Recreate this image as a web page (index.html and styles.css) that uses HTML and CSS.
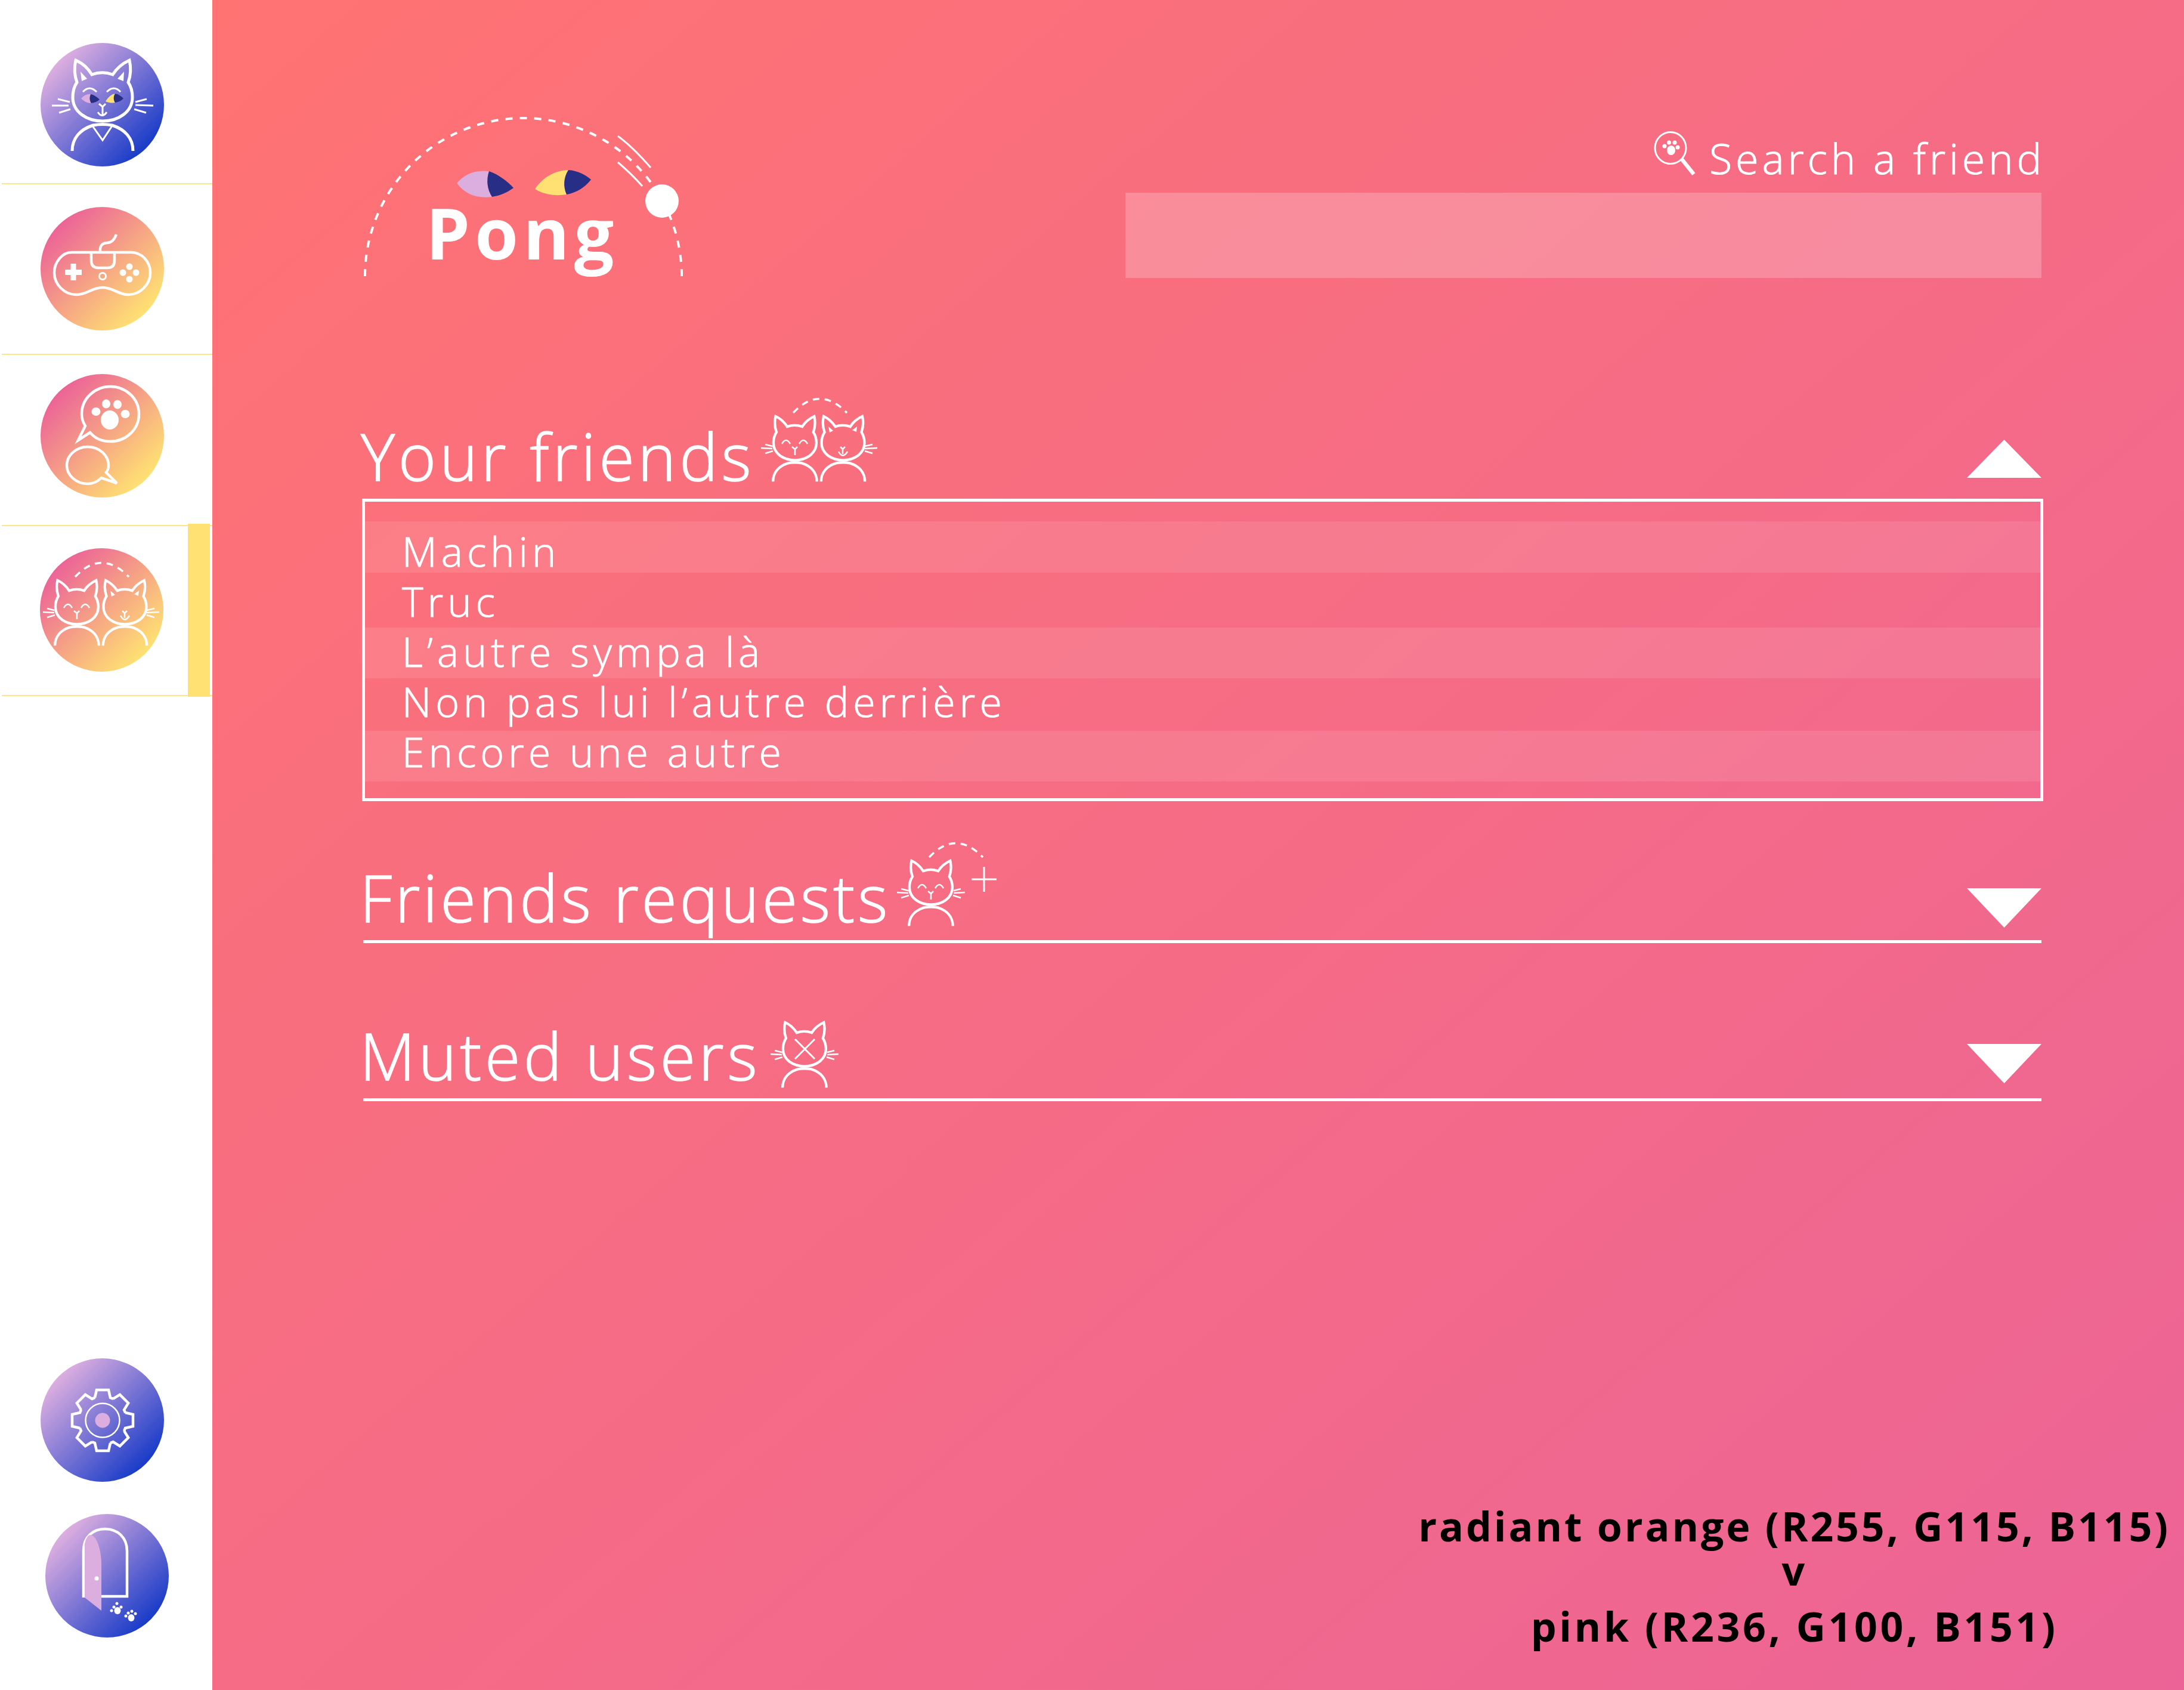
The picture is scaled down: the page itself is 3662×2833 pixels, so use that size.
FILE: index.html
```html
<!DOCTYPE html>
<html lang="en">
<head>
    <meta charset="UTF-8">
    <meta name="viewport" content="width=device-width, initial-scale=1.0">
    <title>Pong - Friends</title>
    <link rel="stylesheet" href="styles.css">
</head>
<body>
    <!-- shared cat drawings -->
    <svg class="sprites" aria-hidden="true">
        <defs>
            <g id="cat-shape">
                <path d="M59 29C72 35 79 42 86 53C97 49 110 49 121 53C128 42 136 35 149 29C152 42 151 55 147 66C151 72 154 80 154 91C154 116 130 131 104 131C78 131 54 116 54 91C54 80 57 72 61 66C57 55 56 42 59 29Z"/>
                <path d="M53 181C53 160 66 145 88 138Q104 135 120 138C142 145 155 160 155 181"/>
            </g>
            <g id="whiskers-left" stroke-width="2.5">
                <path d="M12 101L24 104M5 107L24 108M12 116L25 112"/>
            </g>
            <g id="cat-happy">
                <use href="#cat-shape" transform="translate(-13 33) scale(.72)" stroke-width="6"/>
                <path stroke-width="2.5" d="M40 100Q47 88 54 100M69 100Q76 88 83 100M57 105L62 109L66 105M62 109V119"/>
                <use href="#whiskers-left"/>
            </g>
            <g id="dash-arc">
                <path stroke-width="3.5" stroke-dasharray="11 9" d="M59 48Q103 1 149 48"/>
            </g>
            <g id="two-cats">
                <use href="#dash-arc"/>
                <use href="#cat-happy"/>
                <use href="#cat-shape" transform="translate(67.6 33) scale(.72)" stroke-width="6"/>
                <path stroke="none" fill="#fff" d="M118 71L126 78L120 81ZM166 71L158 77L165 80Z"/>
                <path stroke-width="2.5" d="M138 105L142 109L146 105M142 109V117M135 113Q142 126 150 113M192 101L179 104M200 107L179 108M192 116L179 112"/>
            </g>
        </defs>
    </svg>

    <div class="page">
        <nav class="sidebar">
            <div class="nav-list">
                <div class="nav-item nav-profile">
                    <svg class="avatar avatar-cool" viewBox="0 0 207 207">
                        <g class="lines" stroke-width="5">
                            <use href="#cat-shape"/>
                            <path stroke-width="3" d="M71 82Q82 70 94 82M111 82Q123 70 134 82M98 102L104 107L109 102M104 107V120M96 116Q103 127 111 116M87 139L104 163L120 139"/>
                            <path stroke-width="3" d="M29 94L49 99M19 105L47 105M31 117L50 111M178 94L159 99M189 105L159 104M177 117L157 111"/>
                        </g>
                        <path fill="#fff" d="M67 48L78 60L69 64ZM140 48L129 60L139 64Z"/>
                        <path fill="#dcaee0" d="M68 93C73 88 78 85 84 86C82 91 82 96 85 101C78 101 73 98 68 93Z"/>
                        <path fill="#ffe173" d="M109 98C114 90 119 86 125 85C122 90 122 95 125 100C119 101 114 100 109 98Z"/>
                        <path fill="#262e85" d="M84 86C90 87 95 91 99 95C94 99 90 100 85 101C82 96 82 91 84 86ZM125 85C131 86 135 89 139 93C135 97 131 99 125 100C122 95 122 90 125 85Z"/>
                    </svg>
                </div>
                <div class="nav-item nav-game">
                    <svg class="avatar avatar-warm" viewBox="0 0 207 207">
                        <g class="lines" stroke-width="4.5">
                            <path d="M52 76H152C170 76 184 92 184 110C184 130 167 147 147 147C130 147 122 135 104 135C86 135 78 147 60 147C40 147 23 130 23 110C23 92 37 76 52 76Z"/>
                            <path d="M85 76V90Q85 102 97 102H112Q124 102 124 90V76M100 74C99 64 105 60 112 60C120 60 124 54 127 46"/>
                            <circle cx="104" cy="116" r="5.5" stroke-width="3"/>
                        </g>
                        <path fill="#fff" d="M50.500 95H59.500V105H69V114H59.500V123H50.500V114H41V105H50.500Z"/>
                        <g fill="#fff">
                            <circle cx="149" cy="100" r="5.500"/>
                            <circle cx="160" cy="110" r="5.500"/>
                            <circle cx="149" cy="121" r="5.500"/>
                            <circle cx="138" cy="110" r="5.500"/>
                        </g>
                    </svg>
                </div>
                <div class="nav-item nav-chat">
                    <svg class="avatar avatar-warm" viewBox="0 0 207 207">
                        <g class="lines" stroke-width="4.5">
                            <path d="M83 98C92 109 104 113 117 113C143 113 165 93 165 67C165 41 143 21 117 21C91 21 69 41 69 67C69 74 71 81 75 87L63 111Z"/>
                            <path d="M102 174C96 180 88 184 79 184C60 184 44 170 44 153C44 136 60 122 79 122C98 122 114 136 114 153C114 157 113 161 110 165L128 183Z"/>
                        </g>
                        <g fill="#fff">
                            <ellipse cx="116" cy="77" rx="15" ry="16"/>
                            <ellipse cx="93" cy="63" rx="7.500" ry="7"/>
                            <ellipse cx="110" cy="50" rx="7" ry="7.500"/>
                            <ellipse cx="129" cy="51" rx="7" ry="7.500"/>
                            <ellipse cx="142" cy="67" rx="7.500" ry="7"/>
                        </g>
                    </svg>
                </div>
                <div class="nav-item nav-friends active">
                    <svg class="avatar avatar-warm" viewBox="0 0 207 207">
                        <use class="lines" href="#two-cats"/>
                    </svg>
                </div>
            </div>
            <div class="nav-bottom">
                <svg class="avatar avatar-cool" viewBox="0 0 207 207">
                    <g class="lines" stroke-width="4.500">
                        <path id="gear-tooth" d="M91 66L94 53H114L117 66L122 68"/>
                        <use href="#gear-tooth" transform="rotate(45 104 104)"/>
                        <use href="#gear-tooth" transform="rotate(90 104 104)"/>
                        <use href="#gear-tooth" transform="rotate(135 104 104)"/>
                        <use href="#gear-tooth" transform="rotate(180 104 104)"/>
                        <use href="#gear-tooth" transform="rotate(225 104 104)"/>
                        <use href="#gear-tooth" transform="rotate(270 104 104)"/>
                        <use href="#gear-tooth" transform="rotate(315 104 104)"/>
                        <circle cx="104" cy="104" r="28.500" stroke-width="2.500"/>
                    </g>
                    <circle cx="104" cy="104" r="12.500" fill="#dcaee0"/>
                </svg>
                <svg class="avatar avatar-cool avatar-door" viewBox="0 0 207 207">
                    <path class="lines" stroke-width="4.500" d="M64 140V62C64 38 80 25 100 25C122 25 137 40 137 62V138H94"/>
                    <path fill="#dcaee0" d="M66 140V50C68 40 72 35 76 35C86 36 94 60 94 85V162Z"/>
                    <g fill="#fff">
                        <circle cx="86" cy="108" r="3.500"/>
                        <ellipse cx="121" cy="162" rx="5.500" ry="6"/>
                        <circle cx="111" cy="162" r="2.500"/>
                        <circle cx="115" cy="156" r="2.500"/>
                        <circle cx="120" cy="150" r="2.500"/>
                        <circle cx="127" cy="156" r="2.500"/>
                        <ellipse cx="144" cy="174" rx="5.500" ry="6"/>
                        <circle cx="135" cy="171" r="2.500"/>
                        <circle cx="139" cy="166" r="2.500"/>
                        <circle cx="145" cy="163" r="2.500"/>
                        <circle cx="151" cy="167" r="2.500"/>
                    </g>
                </svg>
            </div>
        </nav>

        <main class="main">
            <div class="content">
                <header class="top">
                    <svg class="logo" viewBox="605 190 545 280">
                        <path class="lines" stroke-width="4" stroke-dasharray="12 12.150" d="M612 463A265.500 265 0 0 1 1143 463"/>
                        <path class="lines" stroke-width="3" d="M1036 228C1056 243 1073 260 1091 281M1036 272C1050 284 1063 296 1077 312"/>
                        <ellipse cx="1110" cy="337" rx="28" ry="28" fill="#fff"/>
                        <path fill="#dcaee0" d="M766 307C778 293 795 284 820 287C815 302 817 318 825 330C800 333 780 326 766 307Z"/>
                        <path fill="#262e85" d="M820 287C835 292 850 303 861 315C850 323 838 328 825 330C817 318 815 302 820 287Z"/>
                        <path fill="#ffe173" d="M897 317C910 297 930 286 953 285C945 297 944 313 950 326C930 329 912 326 897 317Z"/>
                        <path fill="#262e85" d="M953 285C968 286 980 292 991 301C980 315 966 323 950 326C944 313 945 297 953 285Z"/>
                        <text class="logo-text" x="714" y="435">Pong</text>
                    </svg>
                    <div class="search">
                        <label class="search-label" for="search-input">
                            <svg class="search-icon" viewBox="2774 218 72 76">
                                <ellipse class="lines" stroke-width="3" cx="2803" cy="248" rx="26" ry="26.500"/>
                                <path class="lines" stroke-width="6.500" d="M2822 267L2842 292"/>
                                <g fill="#fff">
                                    <ellipse cx="2804" cy="252" rx="7" ry="8"/>
                                    <circle cx="2793" cy="245" r="3.500"/>
                                    <circle cx="2800.500" cy="239" r="3.500"/>
                                    <circle cx="2810" cy="239" r="3.500"/>
                                    <circle cx="2815" cy="247" r="3.500"/>
                                </g>
                            </svg>
                            <span>Search a friend</span>
                        </label>
                        <input class="search-input" id="search-input" type="text">
                    </div>
                </header>

                <section class="section section-friends">
                    <div class="head">
                        <h2>Your friends</h2>
                        <svg class="head-icon icon-friends" viewBox="5 24 195 135">
                            <use class="lines" href="#two-cats"/>
                        </svg>
                        <span class="arrow arrow-up"></span>
                    </div>
                    <ul class="friend-list">
                        <li>Machin</li>
                        <li>Truc</li>
                        <li>L’autre sympa là</li>
                        <li>Non pas lui l’autre derrière</li>
                        <li>Encore une autre</li>
                    </ul>
                </section>

                <section class="section section-requests">
                    <div class="head closed">
                        <h2>Friends requests</h2>
                        <svg class="head-icon icon-requests" viewBox="5 24 168 135">
                            <g class="lines">
                                <use href="#dash-arc"/>
                                <use href="#cat-happy"/>
                                <path stroke-width="2.500" d="M112 101L100 104M119 107L100 108M112 116L99 112"/>
                                <path stroke-width="3" d="M130 85H172M151 64V106"/>
                            </g>
                        </svg>
                        <span class="arrow arrow-down"></span>
                    </div>
                </section>

                <section class="section section-muted">
                    <div class="head closed">
                        <h2>Muted users</h2>
                        <svg class="head-icon icon-muted" viewBox="5 54 115 105">
                            <g class="lines">
                                <use href="#cat-shape" transform="translate(-13 33) scale(.72)" stroke-width="6"/>
                                <use href="#whiskers-left"/>
                                <path stroke-width="2.500" d="M112 101L100 104M119 107L100 108M112 116L99 112"/>
                                <path stroke-width="3" d="M46 82L79 115M79 82L46 115"/>
                            </g>
                        </svg>
                        <span class="arrow arrow-down"></span>
                    </div>
                </section>
            </div>

            <div class="note">
                <p>radiant orange (R255, G115, B115)</p>
                <p class="note-v">v</p>
                <p class="note-pink">pink (R236, G100, B151)</p>
            </div>
        </main>
    </div>
</body>
</html>
```

FILE: styles.css
```css
/* General */
body {
    margin: 0;
    background: #fff;
    font-family: "Open Sans", "Noto Sans", sans-serif;
    color: #fff;
}

.sprites {
    position: absolute;
    width: 0;
    height: 0;
}

.lines {
    fill: none;
    stroke: #fff;
}

.page {
    display: flex;
    width: 3662px;
    height: 2833px;
    overflow: hidden;
}

/* Sidebar */
.sidebar {
    display: flex;
    flex-direction: column;
    justify-content: space-between;
    flex: 0 0 356px;
    background: #fff;
}

.nav-item {
    position: relative;
    box-sizing: border-box;
    margin-left: 3px;
    padding-left: 65px;
    border-bottom: 2px solid #ffe58a;
}

.nav-profile {
    height: 309px;
    padding-top: 72px;
}

.nav-game {
    height: 286px;
    padding-top: 38px;
}

.nav-chat {
    height: 287px;
    padding-top: 32px;
}

.nav-friends {
    height: 285px;
    padding-top: 37px;
    padding-left: 64px;
}

.nav-item.active::after {
    content: "";
    position: absolute;
    top: -4px;
    right: 4px;
    bottom: -3px;
    width: 37px;
    background: #ffe173;
}

.nav-bottom {
    display: flex;
    flex-direction: column;
    gap: 54px;
    padding: 0 0 88px 68px;
}

.avatar {
    display: block;
    width: 207px;
    height: 207px;
    border-radius: 50%;
}

.avatar-cool {
    background: linear-gradient(135deg, #dcaee0 15%, #1a3cc8 85%);
}

.avatar-warm {
    background: linear-gradient(135deg, #ec6497 15%, #ffe173 85%);
}

.avatar-door {
    margin-left: 8px;
}

/* Main */
.main {
    display: flex;
    flex-direction: column;
    flex: 1;
    background: linear-gradient(to bottom right, #ff7373, #ec6497);
}

.content {
    padding: 190px 239px 0 253px;
}

.top {
    display: flex;
    justify-content: space-between;
}

.logo {
    display: block;
    width: 545px;
    height: 280px;
    margin-left: -4px;
}

.logo-text {
    font-size: 118px;
    font-weight: 700;
    letter-spacing: 8px;
    fill: #fff;
}

/* Search */
.search {
    width: 1536px;
}

.search-label {
    display: flex;
    justify-content: flex-end;
    align-items: flex-start;
    gap: 22px;
    height: 133px;
    box-sizing: border-box;
    font-size: 70px;
    font-weight: 300;
    letter-spacing: 5.9px;
    line-height: 100px;
    -webkit-text-stroke: 1px #fff;
}

.search-icon {
    display: block;
    width: 72px;
    height: 76px;
    margin-top: 28px;
}

.search-label span {
    margin: 25px -6px 0 0;
}

.search-input {
    display: block;
    box-sizing: border-box;
    width: 100%;
    height: 143px;
    border: 0;
    background: rgba(255, 255, 255, 0.22);
}

/* Sections */
.section-friends {
    margin-top: 223px;
}

.section-requests {
    margin-top: 90px;
}

.section-muted {
    margin-top: 117px;
}

.head {
    display: flex;
    align-items: flex-end;
    height: 143px;
}

.head.closed {
    border-bottom: 5px solid #fff;
}

h2 {
    margin: 0 0 0 -6px;
    padding-bottom: 1px;
    font-size: 108px;
    font-weight: 300;
    line-height: 140px;
    white-space: nowrap;
    -webkit-text-stroke: 1.5px #fff;
}

.section-friends h2 {
    margin-left: -4px;
    letter-spacing: 5.8px;
}

.section-requests h2 {
    letter-spacing: 4.9px;
}

.section-muted h2 {
    letter-spacing: 5.6px;
}

.head-icon {
    display: block;
    flex: none;
    overflow: visible;
}

.icon-friends {
    width: 195px;
    height: 135px;
    margin: 0 0 33px 11px;
}

.icon-requests {
    width: 168px;
    height: 135px;
    margin: 0 0 28px 11px;
}

.icon-muted {
    width: 115px;
    height: 105px;
    margin: 0 0 22px 17px;
}

.arrow {
    flex: none;
    width: 125px;
    margin-left: auto;
    background: #fff;
}

.arrow-up {
    height: 64px;
    margin-bottom: 35px;
    clip-path: polygon(50% 0, 100% 100%, 0 100%);
}

.arrow-down {
    height: 66px;
    margin-bottom: 21px;
    clip-path: polygon(0 0, 100% 0, 50% 100%);
}

.section-muted .arrow-down {
    margin-bottom: 25px;
}

/* Friend list */
.friend-list {
    margin: 0 -3px 0 -2px;
    padding: 33px 0 28px;
    border: 5px solid #fff;
    list-style: none;
    font-size: 68px;
    font-weight: 300;
    letter-spacing: 7.1px;
    line-height: 60px;
    -webkit-text-stroke: 1px #fff;
}

.friend-list li {
    box-sizing: border-box;
    padding-left: 62px;
}

.friend-list li:nth-child(odd) {
    background: rgba(255, 255, 255, 0.1);
}

.friend-list li:nth-child(1) {
    height: 86px;
    padding-top: 20px;
}

.friend-list li:nth-child(2) {
    height: 92px;
    padding-top: 18px;
}

.friend-list li:nth-child(3) {
    height: 85px;
    padding-top: 10px;
}

.friend-list li:nth-child(4) {
    height: 88px;
    padding-top: 9px;
}

.friend-list li:nth-child(5) {
    height: 85px;
    padding-top: 5px;
}

/* Colour note */
.note {
    align-self: flex-end;
    margin: auto 23px 65px 0;
    color: #000;
    font-size: 68px;
    font-weight: 700;
    letter-spacing: 3.85px;
    line-height: 84px;
    text-align: center;
}

.note p {
    margin: 0;
}

.note .note-v {
    margin: -10px 0 10px;
}

.note .note-pink {
    letter-spacing: 4.6px;
}
```
